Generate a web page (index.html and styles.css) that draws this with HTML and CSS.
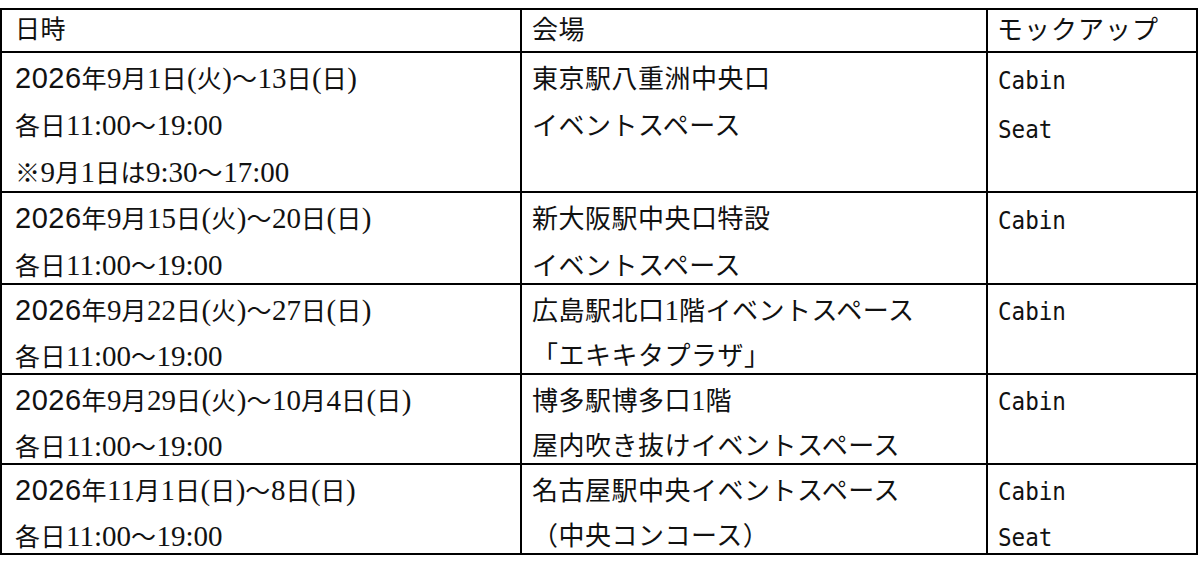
FILE: index.html
```html
<!DOCTYPE html>
<html lang="ja">
<head>
<meta charset="utf-8">
<title>展示会場</title>
<link rel="stylesheet" href="styles.css">
</head>
<body>
<div class="grid">
  <div class="cell hd c1">日時</div>
  <div class="cell hd c2">会場</div>
  <div class="cell hd c3">モックアップ</div>

  <div class="cell c1 w">
    <div class="ln"><span class="s">2026</span>年<span class="r">9</span>月<span class="r">1</span>日<span class="r">(</span>火<span class="r">)</span>〜<span class="r">13</span>日<span class="r">(</span>日<span class="r">)</span></div>
    <div class="ln">各日<span class="r">11:00</span>〜<span class="r">19:00</span></div>
    <div class="ln">※<span class="r">9</span>月<span class="r">1</span>日は<span class="r">9:30</span>〜<span class="r">17:00</span></div>
  </div>
  <div class="cell c2 w">
    <div class="ln">東京駅八重洲中央口</div>
    <div class="ln">イベントスペース</div>
  </div>
  <div class="cell c3 w">
    <div class="ln">Cabin</div>
    <div class="ln">Seat</div>
  </div>

  <div class="cell c1 w">
    <div class="ln"><span class="s">2026</span>年<span class="r">9</span>月<span class="r">15</span>日<span class="r">(</span>火<span class="r">)</span>〜<span class="r">20</span>日<span class="r">(</span>日<span class="r">)</span></div>
    <div class="ln">各日<span class="r">11:00</span>〜<span class="r">19:00</span></div>
  </div>
  <div class="cell c2 w">
    <div class="ln">新大阪駅中央口特設</div>
    <div class="ln">イベントスペース</div>
  </div>
  <div class="cell c3 w">
    <div class="ln">Cabin</div>
  </div>

  <div class="cell c1">
    <div class="ln"><span class="s">2026</span>年<span class="r">9</span>月<span class="r">22</span>日<span class="r">(</span>火<span class="r">)</span>〜<span class="r">27</span>日<span class="r">(</span>日<span class="r">)</span></div>
    <div class="ln">各日<span class="r">11:00</span>〜<span class="r">19:00</span></div>
  </div>
  <div class="cell c2">
    <div class="ln">広島駅北口<span class="r">1</span>階イベントスペース</div>
    <div class="ln">「エキキタプラザ」</div>
  </div>
  <div class="cell c3">
    <div class="ln">Cabin</div>
  </div>

  <div class="cell c1">
    <div class="ln"><span class="s">2026</span>年<span class="r">9</span>月<span class="r">29</span>日<span class="r">(</span>火<span class="r">)</span>〜<span class="r">10</span>月<span class="r">4</span>日<span class="r">(</span>日<span class="r">)</span></div>
    <div class="ln">各日<span class="r">11:00</span>〜<span class="r">19:00</span></div>
  </div>
  <div class="cell c2">
    <div class="ln">博多駅博多口<span class="r">1</span>階</div>
    <div class="ln">屋内吹き抜けイベントスペース</div>
  </div>
  <div class="cell c3">
    <div class="ln">Cabin</div>
  </div>

  <div class="cell c1">
    <div class="ln"><span class="s">2026</span>年<span class="r">11</span>月<span class="r">1</span>日<span class="r">(</span>日<span class="r">)</span>〜<span class="r">8</span>日<span class="r">(</span>日<span class="r">)</span></div>
    <div class="ln">各日<span class="r">11:00</span>〜<span class="r">19:00</span></div>
  </div>
  <div class="cell c2">
    <div class="ln">名古屋駅中央イベントスペース</div>
    <div class="ln">（中央コンコース）</div>
  </div>
  <div class="cell c3">
    <div class="ln">Cabin</div>
    <div class="ln">Seat</div>
  </div>
</div>
</body>
</html>
```

FILE: styles.css
```css
html, body {
  margin: 0;
  padding: 0;
  background: #fff;
}
body {
  padding-top: 8px;
  color: #111;
  font-family: "Noto Sans CJK JP", sans-serif;
}
.grid {
  display: grid;
  grid-template-columns: 518px 464px 208px;
  grid-template-rows: 41px 138px 90px 88px 88px 88px;
  gap: 2px;
  padding: 2px;
  background: #000;
  width: max-content;
}
.cell {
  background: #fff;
  overflow: hidden;
  white-space: nowrap;
}

/* date column */
.c1 {
  padding-left: 13px;
  font-size: 25px;
  letter-spacing: 0.5px;
}
.c1 .ln {
  line-height: 36px;
}
.c1 .ln:first-child {
  margin-top: 6px;
}
.c1 .ln + .ln {
  margin-top: 10px;
}
.c1.w .ln + .ln {
  margin-top: 11px;
}

/* venue column */
.c2 {
  padding-left: 10px;
  font-size: 26px;
  letter-spacing: 0.5px;
}
.c2 .ln {
  line-height: 38px;
}
.c2 .ln:first-child {
  margin-top: 5px;
}
.c2 .ln + .ln {
  margin-top: 7px;
}
.c2.w .ln + .ln {
  margin-top: 9px;
}

/* mockup column */
.c3 {
  padding-left: 10px;
  font-family: "DejaVu Sans Mono", monospace;
  font-size: 24px;
}
.c3 .ln {
  line-height: 28px;
  transform: scaleX(0.94);
  transform-origin: left center;
}
.c3 .ln:first-child {
  margin-top: 13px;
}
.c3.w .ln:first-child {
  margin-top: 14px;
}
.c3 .ln + .ln {
  margin-top: 18px;
}
.c3.w .ln + .ln {
  margin-top: 21px;
}

/* header row */
.hd {
  line-height: 35px;
}
.hd.c1 {
  font-size: 25px;
}
.hd.c3 {
  font-family: "Noto Sans CJK JP", sans-serif;
  font-size: 26px;
  letter-spacing: 1px;
  padding-left: 9px;
}

/* latin runs */
.r {
  font-family: "Liberation Serif", serif;
  font-size: 29px;
  letter-spacing: 0;
  line-height: 1;
}
.s {
  font-family: "Liberation Sans", sans-serif;
  font-size: 29px;
  letter-spacing: 0.5px;
  line-height: 1;
}
```
